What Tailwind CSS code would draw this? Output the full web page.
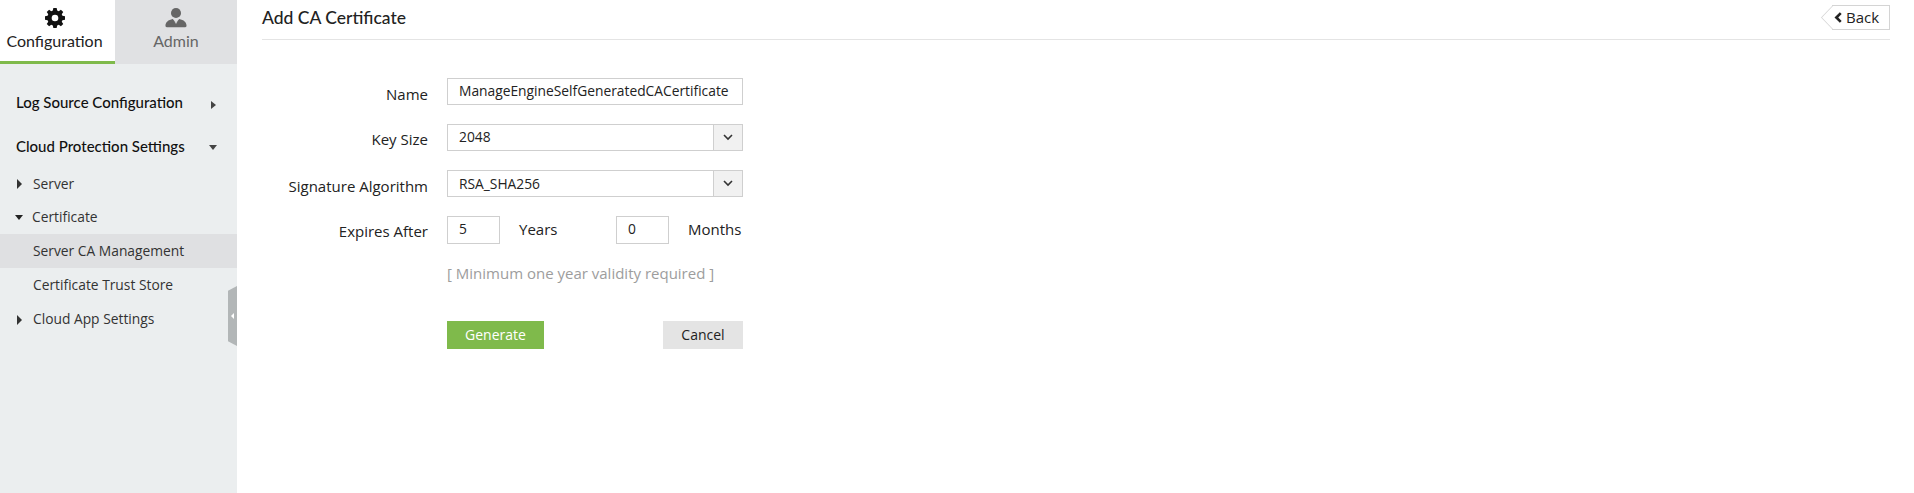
<!DOCTYPE html>
<html lang="en">
<head>
    <meta charset="UTF-8">
    <title>Add CA Certificate</title>
    <script src="https://cdn.jsdelivr.net/npm/@tailwindcss/browser@4"></script>
</head>
<body class="bg-white overflow-hidden font-['Open_Sans',sans-serif] text-[15px] text-[#222]">
    <div class="flex h-[493px] w-[1914px]">
        <!-- sidebar -->
        <aside class="relative w-[237px] shrink-0 bg-[#ebeeef]">
            <div class="flex h-[64px] font-['Lato',sans-serif] text-[16px]">
                <div class="flex w-[115px] flex-col items-center border-b-[3px] border-[#7fba4b] bg-white pr-[6px] pt-[8px] text-[#222]">
                    <svg class="h-[20px] w-[20px]" viewBox="0 0 24 24" fill="#111"><path fill-rule="evenodd" d="M10 0h4l.6 3.100 1.900.8L19.100 2.100l2.800 2.800-1.800 2.600.8 1.900L24 10v4l-3.100.6-.8 1.900 1.800 2.600-2.800 2.800-2.600-1.800-1.900.8L14 24h-4l-.6-3.100-1.900-.8-2.600 1.800-2.800-2.800 1.800-2.600-.8-1.900L0 14v-4l3.100-.6.8-1.900-1.800-2.600 2.800-2.800 2.600 1.800 1.900-.8L10 0zm2 8a4 4 0 1 0 0 8 4 4 0 0 0 0-8z"/></svg>
                    <span class="mt-[3px] leading-[20px]">Configuration</span>
                </div>
                <div class="flex w-[122px] flex-col items-center bg-[#e0e1e3] pt-[7px] text-[#666]">
                    <svg class="h-[22px] w-[22px]" viewBox="0 0 24 24" fill="#666"><circle cx="12" cy="6.500" r="5.500"/><path d="M2 22c-1 0-1.500-.6-1.500-1.500 0-4 3-6.500 8-7.500l2 2.500.9 3 .6-3 .6 3 .9-3 2-2.500c5 1 8 3.500 8 7.500 0 .9-.5 1.500-1.500 1.500z"/></svg>
                    <span class="mt-[2px] leading-[20px]">Admin</span>
                </div>
            </div>
            <nav class="pt-[28px]">
                <div class="flex h-[20px] items-center justify-between pl-[16px] pr-[21px] font-['Lato',sans-serif] text-[15px] font-medium text-[#111]">
                    <span>Log Source Configuration</span>
                    <span class="mt-[5px] h-0 w-0 border-y-[4.500px] border-l-[5px] border-y-transparent border-l-[#444]"></span>
                </div>
                <div class="mt-[24px] flex h-[20px] items-center justify-between pl-[16px] pr-[20px] font-['Lato',sans-serif] text-[15px] font-medium text-[#111]">
                    <span>Cloud Protection Settings</span>
                    <span class="mt-[3px] h-0 w-0 border-x-[4.500px] border-t-[5px] border-x-transparent border-t-[#444]"></span>
                </div>
                <ul class="mt-[11px] text-[13.800px] text-[#333]">
                    <li class="flex h-[34px] items-center pl-[17px]"><span class="mr-[11px] h-0 w-0 border-y-[5px] border-l-[5px] border-y-transparent border-l-[#333]"></span>Server</li>
                    <li class="flex h-[33px] items-center pl-[15px]"><span class="mr-[9px] h-0 w-0 border-x-[4.500px] border-t-[5px] border-x-transparent border-t-[#222]"></span>Certificate</li>
                    <li class="flex h-[34px] items-center bg-[#dfe0e2] pl-[33px]">Server CA Management</li>
                    <li class="flex h-[35px] items-center pl-[33px]">Certificate Trust Store</li>
                    <li class="flex h-[33px] items-center pl-[17px]"><span class="mr-[11px] h-0 w-0 border-y-[5px] border-l-[5px] border-y-transparent border-l-[#333]"></span>Cloud App Settings</li>
                </ul>
            </nav>
            <!-- collapse handle -->
            <div class="absolute right-0 top-[286px] flex h-[60px] w-[9px] items-center justify-center bg-[#b2b6b7] [clip-path:polygon(100%_0,100%_100%,0_92%,0_8%)]">
                <span class="h-0 w-0 border-y-[3px] border-r-[3px] border-y-transparent border-r-white"></span>
            </div>
        </aside>

        <!-- content -->
        <main class="flex-1 pl-[25px] pr-[24px]">
            <header class="flex h-[40px] items-start justify-between border-b border-[#e4e4e4]">
                <h1 class="mt-[5px] font-['Lato',sans-serif] text-[17.500px] font-medium leading-[26px] text-[#222]">Add CA Certificate</h1>
                <a class="relative mt-[5px] flex h-[25px] w-[58px] items-center justify-center gap-[4px] border border-l-0 border-[#d4d4d4] bg-white text-[15px] text-[#222]">
                    <span class="absolute left-[-11px] top-[-1px] h-[25px] w-[12px] bg-[#d4d4d4] [clip-path:polygon(100%_0,100%_100%,0_50%)]"></span>
                    <span class="absolute left-[-10px] top-0 h-[23px] w-[11px] bg-white [clip-path:polygon(100%_0,100%_100%,0_50%)]"></span>
                    <svg class="ml-[-8px] h-[11px] w-[8px]" viewBox="0 0 7 10" fill="none" stroke="#222" stroke-width="2.400"><path d="M6 1 2 5l4 4"/></svg>
                    Back
                </a>
            </header>

            <form class="mt-[38px] grid w-[481px] grid-cols-[166px_296px] gap-x-[19px]">
                <label class="h-[27px] pt-[6px] text-right leading-[20px]">Name</label>
                <div class="flex h-[27px] items-center border border-[#cfcfcf] pl-[11px] text-[13.800px]">ManageEngineSelfGeneratedCACertificate</div>

                <label class="mt-[19px] h-[27px] pt-[5px] text-right leading-[20px]">Key Size</label>
                <div class="mt-[19px] flex h-[27px] items-center justify-between border border-[#cfcfcf] pl-[11px] text-[13.800px]">
                    <span>2048</span>
                    <span class="flex h-full w-[29px] items-center justify-center border-l border-[#cfcfcf] bg-[#f1f1f1]">
                        <svg class="h-[7px] w-[10px]" viewBox="0 0 10 7" fill="none" stroke="#333" stroke-width="1.600"><path d="m1 1 4 4 4-4"/></svg>
                    </span>
                </div>

                <label class="mt-[19px] h-[27px] pt-[6px] text-right leading-[20px]">Signature Algorithm</label>
                <div class="mt-[19px] flex h-[27px] items-center justify-between border border-[#cfcfcf] pl-[11px] text-[13.800px]">
                    <span class="pt-[2px]">RSA_SHA256</span>
                    <span class="flex h-full w-[29px] items-center justify-center border-l border-[#cfcfcf] bg-[#f1f1f1]">
                        <svg class="h-[7px] w-[10px]" viewBox="0 0 10 7" fill="none" stroke="#333" stroke-width="1.600"><path d="m1 1 4 4 4-4"/></svg>
                    </span>
                </div>

                <label class="mt-[19px] h-[28px] pt-[5px] text-right leading-[20px]">Expires After</label>
                <div class="mt-[19px] flex h-[28px] items-center">
                    <div class="flex h-full w-[53px] items-center border border-[#cfcfcf] pl-[11px] pb-[2px] text-[13.800px]">5</div>
                    <span class="ml-[19px] w-[97px] pb-[2px]">Years</span>
                    <div class="flex h-full w-[53px] items-center border border-[#cfcfcf] pl-[11px] pb-[2px] text-[13.800px]">0</div>
                    <span class="ml-[19px] pb-[2px]">Months</span>
                </div>

                <p class="col-start-2 mt-[19px] leading-[20px] text-[#9d9d9d]">[ Minimum one year validity required ]</p>

                <div class="col-start-2 mt-[38px] flex justify-between">
                    <button type="button" class="h-[28px] w-[97px] bg-[#7fba4b] pb-[2px] text-[14px] text-white">Generate</button>
                    <button type="button" class="h-[28px] w-[80px] bg-[#e4e4e4] pb-[2px] text-[14px] text-[#222]">Cancel</button>
                </div>
            </form>
        </main>
    </div>
</body>
</html>
